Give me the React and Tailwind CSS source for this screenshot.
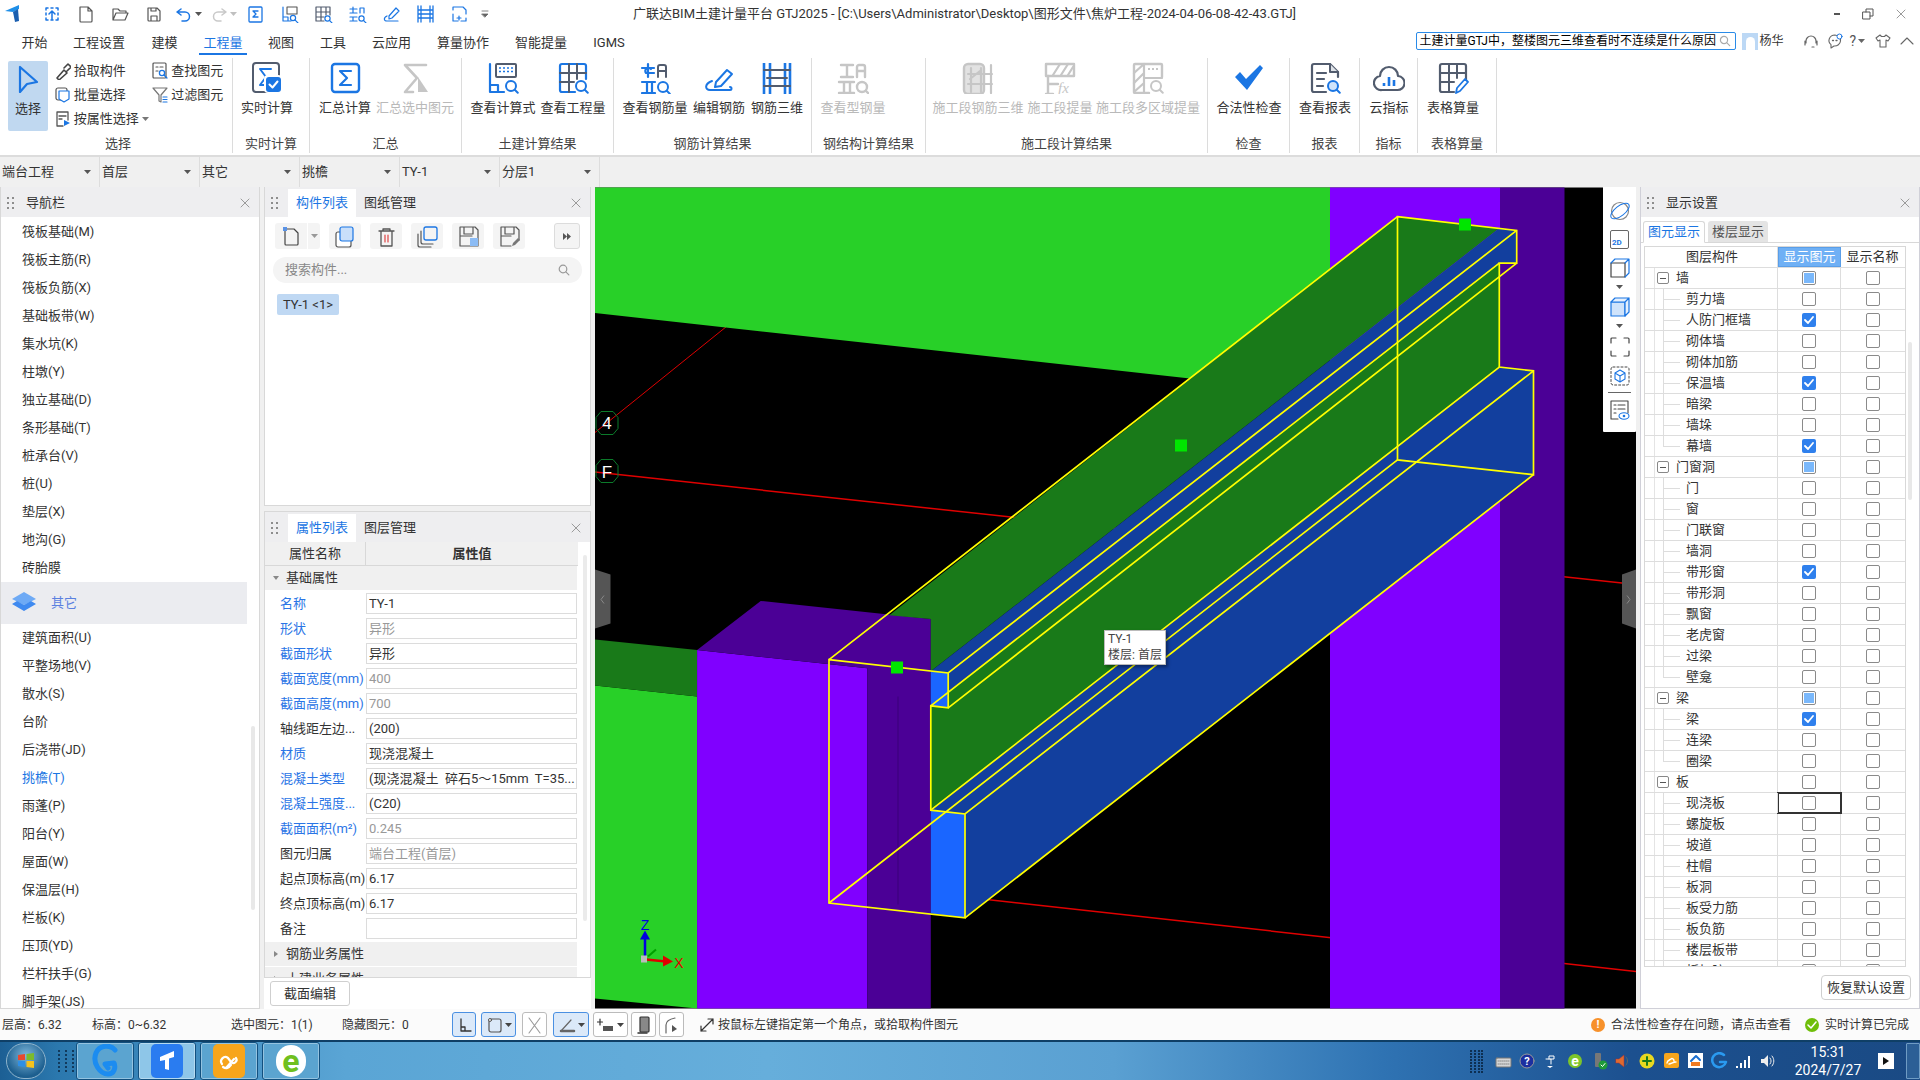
import React from 'react';

const BLUE = '#1b76e3';
const DK = '#525c6e';
const GR = '#c6c6c6';

function Svg({ w = 32, h = 32, vb, className = '', children }) {
  return (
    <svg width={w} height={h} viewBox={vb || `0 0 ${w} ${h}`} fill="none" strokeLinecap="round" strokeLinejoin="round" className={`shrink-0 ${className}`}>
      {children}
    </svg>
  );
}

function Caret({ color = '#666' }) {
  return (
    <Svg w={7} h={4}>
      <path d="M0 0h7L3.5 4z" fill={color} />
    </Svg>
  );
}

function Grip() {
  return (
    <Svg w={8} h={15} className="ml-[6px]">
      {[1, 6, 11].map((y) => (
        <g key={y} fill="#8d8d8d">
          <rect x="0" y={y} width="2" height="2" />
          <rect x="5" y={y} width="2" height="2" />
        </g>
      ))}
    </Svg>
  );
}

function Close() {
  return (
    <Svg w={10} h={10}>
      <path d="M1 1l8 8M9 1l-8 8" stroke="#9a9a9a" strokeWidth="1" />
    </Svg>
  );
}

function Mag({ x = 24, y = 25, r = 4.5, color = BLUE, sw = 2 }) {
  return (
    <g stroke={color} strokeWidth={sw}>
      <circle cx={x} cy={y} r={r} />
      <path d={`M${x + r * 0.75} ${y + r * 0.75}l3 3`} />
    </g>
  );
}

const ribbonIcons = {
  realtime: (
    <Svg>
      <rect x="2" y="1" width="26" height="29" rx="3" stroke={DK} strokeWidth="2" />
      <path d="M20 7H9l6 8-6 8h5" stroke={BLUE} strokeWidth="2" />
      <rect x="13" y="13" width="18" height="18" rx="4" fill="#fff" />
      <rect x="15" y="15" width="15" height="15" rx="3" fill={BLUE} />
      <path d="M18.5 22.5l3 3 5-6" stroke="#fff" strokeWidth="2" />
    </Svg>
  ),
  sum: (
    <Svg>
      <rect x="3" y="2" width="27" height="28" rx="3" stroke={BLUE} strokeWidth="2.4" />
      <path d="M22 9H11l7 7-7 7h11" stroke={BLUE} strokeWidth="2.2" />
    </Svg>
  ),
  sumSel: (
    <Svg>
      <path d="M27 3H6l12 13L6 30h8" stroke={GR} strokeWidth="2.6" />
      <path d="M19 15l10 15H19z" fill={GR} />
    </Svg>
  ),
  formula: (
    <Svg>
      <path d="M3 2v28h14M3 23h8v7" stroke={BLUE} strokeWidth="2.2" />
      <rect x="9" y="2" width="20" height="13" rx="1" stroke={DK} strokeWidth="2" />
      <path d="M12 6h14M12 9.5h14" stroke={BLUE} strokeWidth="1.6" strokeDasharray="2 2" strokeLinecap="butt" />
      <Mag x={24} y={24} r={5} />
    </Svg>
  ),
  quantity: (
    <Svg>
      <path d="M18 30H5a2 2 0 0 1-2-2V4a2 2 0 0 1 2-2h22a2 2 0 0 1 2 2v13" stroke={BLUE} strokeWidth="2.2" />
      <path d="M12 2v28M20 2v15M3 11h26M3 20h14" stroke={DK} strokeWidth="2" />
      <Mag x={24} y={24} r={5} />
    </Svg>
  ),
  rebar: (
    <Svg>
      <path d="M3 6h12M15 11h-8a3 3 0 1 1 5-4M9 2v13" stroke={BLUE} strokeWidth="2.2" />
      <path d="M19 15V5a2 2 0 0 1 2-2h4a2 2 0 0 1 2 2v10M19 9h8" stroke={DK} strokeWidth="2" />
      <path d="M3 20h13M3 31h13M8 20v11M13 20v11" stroke={BLUE} strokeWidth="2.2" />
      <Mag x={24} y={25} r={5} />
    </Svg>
  ),
  edit: (
    <Svg>
      <path d="M13 20L24 8l5 4-11 12-6 1z" stroke={BLUE} strokeWidth="2" />
      <path d="M9 19c-8 3-7 9-2 9h20c2 0 2-3 0-3" stroke={BLUE} strokeWidth="2" />
    </Svg>
  ),
  rebar3d: (
    <Svg>
      <path d="M3 1v32M9 1v32M24 1v32M29 1v32" stroke={BLUE} strokeWidth="2.6" strokeLinecap="butt" />
      <path d="M3 8h26M3 24h26M6 16h20" stroke={DK} strokeWidth="2" />
    </Svg>
  ),
  steel: (
    <Svg>
      <path d="M4 3h12M10 3v12M4 15h12" stroke={GR} strokeWidth="2.4" />
      <path d="M20 15V5a2 2 0 0 1 2-2h4a2 2 0 0 1 2 2v10M20 9h8" stroke={GR} strokeWidth="2.4" />
      <path d="M2 20h15M2 31h15M7 20v11M13 20v11" stroke={GR} strokeWidth="2.4" />
      <Mag x={25} y={25} r={5} color={GR} sw={2.4} />
    </Svg>
  ),
  seg3d: (
    <Svg>
      <rect x="2" y="2" width="20" height="30" rx="4" fill="#e2e2e2" stroke={GR} strokeWidth="2.4" />
      <path d="M9 6v24M19 6v24M29 3v28M6 12h24M6 22h24M8 17l10-8" stroke={GR} strokeWidth="2.2" />
    </Svg>
  ),
  segFx: (
    <Svg>
      <path d="M2 14V2h28v12z" stroke={GR} strokeWidth="2.4" />
      <path d="M9 13l7-11M17 13l7-11M24 13l5-8" stroke={GR} strokeWidth="2.2" />
      <path d="M4 14v18M2 32h7M4 22h10" stroke={GR} strokeWidth="2.4" />
      <text x="14" y="31" fontSize="15" fontStyle="italic" fontFamily="'Liberation Serif',serif" fill={GR}>fx</text>
    </Svg>
  ),
  segArea: (
    <Svg>
      <path d="M17 31H3a1 1 0 0 1-1-1V3a1 1 0 0 1 1-1h26a1 1 0 0 1 1 1v12" stroke={GR} strokeWidth="2.4" />
      <path d="M2 11L12 2M2 21L12 11M2 30L12 21M12 2v29M12 16h18" stroke={GR} strokeWidth="2.2" />
      <path d="M16 7h11" stroke={GR} strokeWidth="2" strokeDasharray="2 2" strokeLinecap="butt" />
      <Mag x={24} y={24} r={5} color={GR} />
    </Svg>
  ),
  check: (
    <Svg>
      <path d="M2 15l5-5 6 7L27 3l3 3-16 22z" fill={BLUE} />
    </Svg>
  ),
  report: (
    <Svg>
      <path d="M17 30H5a2 2 0 0 1-2-2V4a2 2 0 0 1 2-2h16l8 8v5" stroke={DK} strokeWidth="2.2" />
      <path d="M21 2v8h8" stroke={DK} strokeWidth="2" fill="#dfe3e8" />
      <path d="M8 11h9M8 17h7M8 24h6" stroke={DK} strokeWidth="2.2" />
      <circle cx="24" cy="24" r="5" fill="#cfe4fb" />
      <Mag x={24} y={24} r={5} />
    </Svg>
  ),
  cloud: (
    <Svg>
      <path d="M9 28a7 7 0 0 1-2-14 9 9 0 0 1 18 0 7 7 0 0 1-1 14z" stroke={DK} strokeWidth="2.2" />
      <path d="M11 21v3M16 15v9M21 18v6" stroke={BLUE} strokeWidth="2.6" strokeLinecap="butt" />
    </Svg>
  ),
  table: (
    <Svg>
      <path d="M17 30H5a2 2 0 0 1-2-2V4a2 2 0 0 1 2-2h22a2 2 0 0 1 2 2v14" stroke={DK} strokeWidth="2.2" />
      <path d="M12 2v28M20 2v14M3 11h26M3 20h14" stroke={DK} strokeWidth="2" />
      <path d="M19 31l1-5 8-9 3 3-8 9z" stroke={BLUE} strokeWidth="1.8" />
    </Svg>
  ),
};

const ribbonGroups = [
  { label: '实时计算', w: 'w-[77px]', pl: 'pl-[1px]', btns: [{ t: '实时计算', i: 'realtime', w: 'w-[66px]' }] },
  { label: '汇总', w: 'w-[152px]', pl: '', btns: [{ t: '汇总计算', i: 'sum', w: 'w-[70px]' }, { t: '汇总选中图元', i: 'sumSel', w: 'w-[70px]', off: true }] },
  { label: '土建计算结果', w: 'w-[152px]', pl: 'pl-[6px]', btns: [{ t: '查看计算式', i: 'formula', w: 'w-[70px]' }, { t: '查看工程量', i: 'quantity', w: 'w-[70px]' }] },
  { label: '钢筋计算结果', w: 'w-[198px]', pl: 'pl-[6px]', btns: [{ t: '查看钢筋量', i: 'rebar', w: 'w-[70px]' }, { t: '编辑钢筋', i: 'edit', w: 'w-[58px]' }, { t: '钢筋三维', i: 'rebar3d', w: 'w-[58px]' }] },
  { label: '钢结构计算结果', w: 'w-[114px]', pl: 'pl-[6px]', btns: [{ t: '查看型钢量', i: 'steel', w: 'w-[70px]', off: true }] },
  { label: '施工段计算结果', w: 'w-[282px]', pl: 'pl-[6px]', btns: [{ t: '施工段钢筋三维', i: 'seg3d', w: 'w-[92px]', off: true }, { t: '施工段提量', i: 'segFx', w: 'w-[72px]', off: true }, { t: '施工段多区域提量', i: 'segArea', w: 'w-[104px]', off: true }] },
  { label: '检查', w: 'w-[82px]', pl: 'pl-[6px]', btns: [{ t: '合法性检查', i: 'check', w: 'w-[70px]' }] },
  { label: '报表', w: 'w-[70px]', pl: 'pl-[4px]', btns: [{ t: '查看报表', i: 'report', w: 'w-[62px]' }] },
  { label: '指标', w: 'w-[58px]', pl: 'pl-[4px]', btns: [{ t: '云指标', i: 'cloud', w: 'w-[50px]' }] },
  { label: '表格算量', w: 'w-[79px]', pl: 'pl-[4px]', btns: [{ t: '表格算量', i: 'table', w: 'w-[62px]' }] },
];

function RibbonGroup({ group }) {
  return (
    <div className={`${group.w} h-[95px] border-r border-[#dcdcdc] flex flex-col shrink-0`}>
      <div className={`h-[77px] flex shrink-0 ${group.pl}`}>
        {group.btns.map((b) => (
          <div key={b.t} className={`${b.w} flex flex-col items-center pt-[4px]`}>
            <div className="h-[32px] flex items-center">{ribbonIcons[b.i]}</div>
            <div className={`mt-[5px] text-[13px] leading-[18px] whitespace-nowrap ${b.off ? 'text-[#b9b9b9]' : 'text-[#333]'}`}>{b.t}</div>
          </div>
        ))}
      </div>
      <div className="text-[13px] leading-[18px] text-center text-[#444] whitespace-nowrap">{group.label}</div>
    </div>
  );
}

function SmallTool({ icon, label, caret }) {
  return (
    <div className="flex items-center h-[24px]">
      {icon}
      <span className="ml-[3px] text-[13px] whitespace-nowrap">{label}</span>
      {caret && <span className="ml-[3px]"><Caret color="#777" /></span>}
    </div>
  );
}

function SelectGroup() {
  return (
    <div className="w-[233px] h-[95px] border-r border-[#dcdcdc] flex flex-col shrink-0">
      <div className="h-[77px] flex shrink-0 pl-[8px] pt-[3px]">
        <div className="w-[40px] h-[70px] bg-[#c0d8f0] rounded-[2px] flex flex-col items-center pt-[4px]">
          <Svg w={22} h={28}>
            <path d="M3 2v25l7-8 10-2z" stroke={BLUE} strokeWidth="2.2" />
          </Svg>
          <span className="mt-[7px] text-[13px] leading-[18px]">选择</span>
        </div>
        <div className="ml-[7px] mt-[-2px] w-[98px] flex flex-col">
          <SmallTool label="拾取构件" icon={<Svg w={16} h={18}><path d="M2 16l7-8 3 3-8 7zM9 6l4-4 3 3-4 4" stroke="#444" strokeWidth="1.6" /></Svg>} />
          <SmallTool label="批量选择" icon={<Svg w={16} h={18}><rect x="1" y="2" width="11" height="12" rx="2" stroke="#555" strokeWidth="1.2" /><path d="M4 5h10v8l-5 3-5-3z" stroke={BLUE} strokeWidth="1.2" fill="#fff" /></Svg>} />
          <SmallTool label="按属性选择" caret icon={<Svg w={16} h={18}><path d="M8 16H2V2h11v8M4 6h7M4 9h3" stroke="#555" strokeWidth="1.3" /><path d="M9 10l6 3-6 3z" fill={BLUE} /></Svg>} />
        </div>
        <div className="w-[80px] mt-[-2px] flex flex-col">
          <SmallTool label="查找图元" icon={<Svg w={16} h={18}><rect x="1" y="1" width="13" height="15" rx="1" stroke="#555" strokeWidth="1.2" /><path d="M4 5h2M8 5h3M4 9h2" stroke="#555" strokeWidth="1.2" /><Mag x={10} y={11} r={2.6} sw={1.3} /></Svg>} />
          <SmallTool label="过滤图元" icon={<Svg w={16} h={18}><path d="M1 2h14L9 9v7l-2-1V9z" stroke="#777" strokeWidth="1.2" /><path d="M11 11h4M11 13.5h4M11 16h4" stroke={BLUE} strokeWidth="1.2" /></Svg>} />
        </div>
      </div>
      <div className="text-[13px] leading-[18px] text-center text-[#444] pl-[4px]">选择</div>
    </div>
  );
}

const quickIcons = [
  <path key="a" d="M3 3h2M8 3h2M13 3h2M3 3v2M15 3v2M3 8v2M15 8v2M3 13v2M15 13v2M3 15h2M8 15h2M13 15h2M9 14V6M6 9l3-3 3 3" stroke={BLUE} strokeWidth="1.5" />,
  <path key="b" d="M3 2h8l4 4v10a1 1 0 0 1-1 1H4a1 1 0 0 1-1-1zM11 2v4h4" stroke="#555" strokeWidth="1.2" />,
  <path key="c" d="M2 15V4h5l2 2h6v2M2 15l3-7h12l-3 7z" stroke="#555" strokeWidth="1.2" />,
  <path key="d" d="M3 3h9l3 3v9a1 1 0 0 1-1 1H4a1 1 0 0 1-1-1zM6 16v-5h6v5M6 3v3h5V3" stroke="#555" strokeWidth="1.2" />,
];

function QuickBar() {
  const tail = [
    <g key="s"><rect x="3" y="2" width="13" height="15" rx="1" stroke={BLUE} strokeWidth="1.3" /><path d="M12 6H7l3 3-3 3h5" stroke={BLUE} strokeWidth="1.3" /></g>,
    <g key="f"><path d="M3 2v14h8M3 12h5v4" stroke={BLUE} strokeWidth="1.2" /><rect x="7" y="2" width="10" height="7" stroke="#555" strokeWidth="1.1" /><Mag x={13} y={13} r={2.6} sw={1.2} /></g>,
    <g key="q"><path d="M10 16H2V2h14v8M7 2v14M12 2v8M2 7h14M2 12h8" stroke={DK} strokeWidth="1.2" /><Mag x={13.5} y={13.5} r={2.6} sw={1.2} /></g>,
    <g key="r"><path d="M2 4h7M5 2v6M2 8h7M12 8V3h4v5M2 12h7M2 16h7M5 12v4" stroke={BLUE} strokeWidth="1.2" /><Mag x={13.5} y={13.5} r={2.6} sw={1.2} /></g>,
    <g key="e"><path d="M7 11l7-8 3 3-7 7-3 1zM5 11c-4 2-3 5 0 5h11" stroke={BLUE} strokeWidth="1.2" /></g>,
    <path key="t" d="M2 1v16M5 1v16M14 1v16M17 1v16M2 5h15M2 13h15M3 9h13" stroke={BLUE} strokeWidth="1.3" />,
    <g key="x"><path d="M3 5V2h10l3 3v4M3 9v7h5M11 16h5v-3M9 11v4M7 13h4" stroke={BLUE} strokeWidth="1.2" /></g>,
  ];
  return (
    <div className="flex items-center h-[27px] w-[510px] shrink-0">
      <Svg w={20} h={18} className="ml-[5px]">
        <path d="M0 6l14-6v4l-6 3z" fill="#1f8fe8" />
        <path d="M8 7l5-3 1 12-4 1z" fill="#1b5fb0" />
      </Svg>
      <Svg w={18} h={18} className="ml-[18px]">{quickIcons[0]}</Svg>
      <Svg w={18} h={18} className="ml-[16px]">{quickIcons[1]}</Svg>
      <Svg w={18} h={18} className="ml-[16px]">{quickIcons[2]}</Svg>
      <Svg w={18} h={18} className="ml-[16px]">{quickIcons[3]}</Svg>
      <Svg w={16} h={16} className="ml-[13px]"><path d="M5 3L1 6l4 3M1 6h8a4.5 4.5 0 0 1 0 9H6" stroke={BLUE} strokeWidth="1.5" /></Svg>
      <span className="ml-[3px]"><Caret color="#555" /></span>
      <Svg w={16} h={16} className="ml-[9px]"><path d="M11 3l4 3-4 3M15 6H7a4.5 4.5 0 0 0 0 9h3" stroke="#c9c9c9" strokeWidth="1.5" /></Svg>
      <span className="ml-[3px]"><Caret color="#c0c0c0" /></span>
      <div className="flex ml-[9px] gap-[15px]">
        {tail.map((icon, i) => (
          <Svg key={i} w={19} h={18}>{icon}</Svg>
        ))}
      </div>
      <Svg w={8} h={8} className="ml-[12px]"><path d="M1 1h6M1 4h6L4 7z" stroke="#666" fill="#666" strokeWidth="0.8" /></Svg>
    </div>
  );
}

const menus = [
  ['开始', 'w-[51px]'], ['工程设置', 'w-[78px]'], ['建模', 'w-[53px]'], ['工程量', 'w-[64px]'], ['视图', 'w-[52px]'], ['工具', 'w-[52px]'], ['云应用', 'w-[65px]'], ['算量协作', 'w-[78px]'], ['智能提量', 'w-[78px]'], ['IGMS', 'w-[58px]'],
];

function MenuBar() {
  return (
    <div className="flex items-center h-[28px] bg-white shrink-0 relative">
      <div className="flex pl-[9px]">
        {menus.map(([t, w]) => (
          <div key={t} className={`${w} h-[28px] text-center text-[13px] leading-[32px] ${t === '工程量' ? 'text-[#1b76e3]' : 'text-[#333]'}`}>
            <span className={`inline-block h-[28px] px-[4px] ${t === '工程量' ? 'border-b-2 border-[#1b76e3]' : ''}`}>{t}</span>
          </div>
        ))}
      </div>
      <div className="ml-auto flex items-center pr-[6px]">
        <div className="w-[320px] h-[18px] border border-[#2a8be8] rounded-[2px] bg-white flex items-center pl-[2px] pr-[4px]">
          <span className="text-[12px] leading-[16px] text-black whitespace-nowrap overflow-hidden w-[298px]">土建计量GTJ中，整楼图元三维查看时不连续是什么原因</span>
          <Svg w={12} h={12} className="ml-auto"><Mag x={5} y={5} r={3.6} color="#aaa" sw={1.2} /></Svg>
        </div>
        <div className="ml-[6px] w-[16px] h-[17px] bg-[#bcd8f5] flex items-end justify-center">
          <div className="w-[9px] h-[13px] rounded-t-full bg-white" />
        </div>
        <span className="text-[12px] text-[#333] ml-[1px] w-[44px]">杨华</span>
        <Svg w={16} h={16}><path d="M3 10V8a5 5 0 0 1 10 0v2M2 8v4M14 8v4M11 14h-2" stroke="#666" strokeWidth="1.2" /></Svg>
        <Svg w={16} h={16} className="ml-[8px]"><path d="M8 2a6 5.5 0 0 0-4 9.6V15l3-2a6 5.5 0 1 0 1-11z" stroke="#666" strokeWidth="1.1" /><circle cx="12.5" cy="3.5" r="2.5" fill="#fff" stroke={BLUE} /><path d="M5.5 7.5h1M9 7.5h1" stroke="#666" strokeWidth="1.3" /></Svg>
        <span className="ml-[6px] text-[14px] text-[#555] leading-none">?</span>
        <span className="ml-[2px]"><Caret color="#666" /></span>
        <Svg w={16} h={16} className="ml-[10px]"><path d="M5 2L1 5l2 3 2-1v7h6V7l2 1 2-3-4-3-1.500 1.500h-3z" stroke="#666" strokeWidth="1.1" /></Svg>
        <Svg w={14} h={10} className="ml-[9px]"><path d="M1 8l6-6 6 6" stroke="#666" strokeWidth="1.1" /></Svg>
      </div>
    </div>
  );
}

const selectors = ['端台工程', '首层', '其它', '挑檐', 'TY-1', '分层1'];

function SelectorBar() {
  return (
    <div className="flex h-[31px] bg-[#f0f0f0] border-t border-[#dcdcdc] shrink-0">
      {selectors.map((t) => (
        <div key={t} className="w-[100px] border-r border-[#dddddd] flex items-center pl-[2px] pr-[8px] justify-between text-[13px] text-[#333]">
          <span>{t}</span>
          <Caret color="#555" />
        </div>
      ))}
    </div>
  );
}

const navTop = ['筏板基础(M)', '筏板主筋(R)', '筏板负筋(X)', '基础板带(W)', '集水坑(K)', '柱墩(Y)', '独立基础(D)', '条形基础(T)', '桩承台(V)', '桩(U)', '垫层(X)', '地沟(G)', '砖胎膜'];
const navBottom = ['建筑面积(U)', '平整场地(V)', '散水(S)', '台阶', '后浇带(JD)', '挑檐(T)', '雨蓬(P)', '阳台(Y)', '屋面(W)', '保温层(H)', '栏板(K)', '压顶(YD)', '栏杆扶手(G)', '脚手架(JS)'];

function PanelHead({ children }) {
  return (
    <div className="h-[30px] pt-[2px] bg-[#eeeef0] flex items-center shrink-0 pr-[9px]">
      <Grip />
      {children}
      <span className="ml-auto"><Close /></span>
    </div>
  );
}

function Tabs({ active, other }) {
  return (
    <div className="flex items-stretch h-[28px] ml-[9px] text-[13px]">
      <div className="w-[68px] bg-white text-[#1b76e3] flex items-center justify-center">{active}</div>
      <div className="w-[68px] text-[#333] flex items-center justify-center">{other}</div>
    </div>
  );
}

function NavPanel() {
  const row = (t) => (
    <div key={t} className={`h-[28px] pl-[21px] flex items-center text-[13px] shrink-0 ${t === '挑檐(T)' ? 'text-[#1b76e3]' : 'text-[#333]'}`}>{t}</div>
  );
  return (
    <div className="w-[260px] shrink-0 bg-white border-l border-r border-b border-[#d8d8d8] flex flex-col overflow-hidden relative">
      <PanelHead>
        <span className="ml-[11px] text-[13px] text-[#333]">导航栏</span>
      </PanelHead>
      <div className="pt-[1px] flex flex-col">
        {navTop.map(row)}
        <div className="h-[42px] w-[246px] bg-[#ebecf0] flex items-center pl-[11px] shrink-0">
          <Svg w={25} h={22}>
            <path d="M12 0l12 7-12 6L0 7z" fill="#6eaaf5" />
            <path d="M0 12l5-3 7 4 7-4 5 3-12 7z" fill="#3f8af0" />
          </Svg>
          <span className="ml-[14px] text-[13px] text-[#5a80e0]">其它</span>
        </div>
        {navBottom.map(row)}
      </div>
      <div className="absolute left-[250px] top-[539px] w-[4px] h-[184px] rounded-full bg-[#e8e8e8]" />
    </div>
  );
}

const toolIcons = [
  <g key="1"><rect x="3" y="8" width="15" height="15" rx="2" fill="#fff" stroke="#555" strokeWidth="1.2" /><rect x="7" y="3" width="13" height="14" rx="2" fill="#c9dffa" stroke={BLUE} strokeWidth="1.2" /></g>,
  <g key="2"><path d="M5 7h15M9 7V5h7v2M7 7v15h11V7" stroke="#555" strokeWidth="1.3" /><path d="M11 11v7M14 11v7" stroke="#d33" strokeWidth="1.1" /></g>,
  <g key="3"><rect x="9" y="3" width="13" height="13" rx="2" stroke={BLUE} strokeWidth="1.3" /><path d="M6 7v11a2 2 0 0 0 2 2h10M3 10v11a2 2 0 0 0 2 2h11" stroke="#555" strokeWidth="1.2" /></g>,
  <g key="4"><path d="M4 3h15l3 3v16H4zM8 3v7h9V3M4 12h12" stroke="#555" strokeWidth="1.2" /><rect x="14" y="14" width="8" height="8" fill="#8cbcf5" /></g>,
  <g key="5"><path d="M4 3h15l3 3v10M14 22H4V3M8 3v7h9V3M4 12h10" stroke="#555" strokeWidth="1.2" /><path d="M15 22l1-3 5-5 2 2-5 5z" fill="#777" /></g>,
];

function MemberPanel() {
  return (
    <div className="h-[319px] shrink-0 bg-white border border-[#d8d8d8] border-t-0 flex flex-col">
      <PanelHead>
        <Tabs active="构件列表" other="图纸管理" />
      </PanelHead>
      <div className="flex items-center h-[26px] mt-[6px] pl-[10px]">
        <div className="w-[32px] h-[26px] bg-[#f4f4f4] rounded-l-[3px] flex items-center justify-center">
          <Svg w={18} h={20}><path d="M3 3h9l4 4v11a1 1 0 0 1-1 1H4a1 1 0 0 1-1-1z" stroke="#444" strokeWidth="1.2" /><path d="M1 1h4v4H1z" fill="#5a93e6" /></Svg>
        </div>
        <div className="w-[12px] h-[26px] ml-[1px] bg-[#f4f4f4] rounded-r-[3px] flex items-center justify-center"><Caret color="#999" /></div>
        {toolIcons.map((icon, i) => (
          <div key={i} className="w-[32px] h-[26px] bg-[#f4f4f4] rounded-[3px] flex items-center justify-center ml-[9px]">
            <Svg w={24} h={24}>{icon}</Svg>
          </div>
        ))}
        <div className="w-[26px] h-[26px] ml-[29px] bg-[#f4f4f4] border border-[#dcdcdc] rounded-[3px] flex items-center justify-center">
          <Svg w={8} h={7}><path d="M0 0l4 3.500L0 7zM4 0l4 3.500L4 7z" fill="#555" /></Svg>
        </div>
      </div>
      <div className="mx-[8px] mt-[8px] h-[26px] rounded-full bg-[#f4f4f4] flex items-center pl-[12px] pr-[12px] text-[13px] text-[#888]">
        <span>搜索构件...</span>
        <Svg w={12} h={12} className="ml-auto"><Mag x={5} y={5} r={3.8} color="#999" sw={1.2} /></Svg>
      </div>
      <div className="ml-[12px] mt-[11px] w-[62px] h-[21px] rounded-[2px] bg-[#bfd8f3] text-[13px] text-[#333] flex items-center justify-center whitespace-pre">TY-1 &lt;1&gt;</div>
    </div>
  );
}

const props = [
  ['名称', 1, 'TY-1', 0], ['形状', 1, '异形', 1], ['截面形状', 1, '异形', 0], ['截面宽度(mm)', 1, '400', 1], ['截面高度(mm)', 1, '700', 1], ['轴线距左边...', 0, '(200)', 0], ['材质', 1, '现浇混凝土', 0],
  ['混凝土类型', 1, '(现浇混凝土  碎石5～15mm  T=35...', 0], ['混凝土强度...', 1, '(C20)', 0], ['截面面积(m²)', 1, '0.245', 1], ['图元归属', 0, '端台工程(首层)', 1], ['起点顶标高(m)', 0, '6.17', 0], ['终点顶标高(m)', 0, '6.17', 0], ['备注', 0, '', 0],
];

function PropGroup({ label, open, className = '' }) {
  return (
    <div className={`w-[312px] bg-[#f0f0f0] flex items-center pl-[8px] text-[13px] text-[#333] shrink-0 ${className}`}>
      <Svg w={6} h={6}>
        {open ? <path d="M0 1h6L3 5z" fill="#888" /> : <path d="M1 0l4 3-4 3z" fill="#888" />}
      </Svg>
      <span className="ml-[7px]">{label}</span>
    </div>
  );
}

function PropPanel() {
  return (
    <div className="flex-1 flex flex-col min-h-0 mt-[5px]">
      <div className="h-[467px] shrink-0 bg-white border border-[#d8d8d8] flex flex-col overflow-hidden relative">
        <PanelHead>
          <Tabs active="属性列表" other="图层管理" />
        </PanelHead>
        <div className="flex h-[24px] w-[313px] bg-[#f0f0f0] border-b border-[#d8d8d8] text-[13px] text-[#333] shrink-0">
          <div className="w-[101px] border-r border-[#d8d8d8] flex items-center justify-center">属性名称</div>
          <div className="flex-1 flex items-center justify-center font-bold">属性值</div>
        </div>
        <PropGroup label="基础属性" open className="h-[24px]" />
        <div className="pt-[1px] flex flex-col">
          {props.map(([name, link, value, dim]) => (
            <div key={name} className="h-[25px] flex items-center shrink-0">
              <div className={`w-[101px] pl-[15px] text-[13px] whitespace-nowrap ${link ? 'text-[#2a75e6]' : 'text-[#333]'}`}>{name}</div>
              <div className={`w-[211px] h-[21px] border border-[#dcdcdc] bg-white px-[2px] text-[13px] leading-[19px] whitespace-pre overflow-hidden ${dim ? 'text-[#999]' : 'text-[#333]'}`}>{value}</div>
            </div>
          ))}
        </div>
        <PropGroup label="钢筋业务属性" className="h-[24px] mt-[1px]" />
        <PropGroup label="土建业务属性" className="h-[24px] mt-[1px]" />
        <div className="absolute left-[318px] top-[43px] w-[4px] h-[366px] rounded-full bg-[#ebebeb]" />
      </div>
      <div className="flex-1 bg-white flex items-start pl-[6px] pt-[3px]">
        <div className="w-[80px] h-[25px] border border-[#cfcfcf] rounded-[3px] flex items-center justify-center text-[13px] text-[#333]">截面编辑</div>
      </div>
    </div>
  );
}

function Scene() {
  return (
    <svg viewBox="595 188 1041 821" className="w-full h-full block">
      <rect x="595" y="188" width="1041" height="821" fill="#000" />
      <path d="M595 433L760 300" stroke="#d00" strokeWidth="1" />
      <path d="M595 472.600L1636 585" stroke="#e00000" strokeWidth="1.500" />
      <path d="M960 897L1636 972" stroke="#e00000" strokeWidth="1.500" />
      <polygon points="595,188 1330,188 1330,270 1190,379 595,313.600" fill="#28d028" />
      <rect x="1330" y="188" width="170" height="821" fill="#8000ff" />
      <rect x="1500" y="188" width="64.500" height="821" fill="#4b0096" />
      <polygon points="595,686 697.100,697 697.100,1009 595,999" fill="#28d028" />
      <polygon points="595,640 697.100,650.600 697.100,697 595,686" fill="#197a19" />
      <polygon points="697.100,650.600 867.200,668.700 867.200,1009 697.100,1009" fill="#8000ff" />
      <polygon points="697.100,650.600 760.700,601.400 930.800,619.400 930.800,1009 867.200,1009 867.200,668.700" fill="#4b0096" />
      <path d="M898 697V905" stroke="#3a0078" strokeWidth="1" />
      <polygon points="889.300,615.700 1397.500,217.100 1499.300,228.800 930.800,671.800 930.800,619.400" fill="#197a19" />
      <polygon points="930.800,671.800 1499.300,228.800 1516.700,230.900 1516.700,263.700 1499.300,263.700 930.800,706.300" fill="#123f9e" />
      <polygon points="930.800,706.300 1499.300,263.700 1499.300,367.600 930.800,810.700" fill="#197a19" />
      <polygon points="930.800,810.700 1499.300,367.600 1533.500,371.300 1533.500,475.200 965,918.300 965,814.400" fill="#123f9e" />
      <polygon points="930.800,672 948.200,673.400 948.200,708.400 930.800,706.300" fill="#1a66ff" />
      <polygon points="930.800,810.700 965,814.400 965,918.300 930.800,914" fill="#1a66ff" />
      <g stroke="#ffff00" strokeWidth="1.700" fill="none">
        <polygon points="829,660.200 948.200,673.400 948.200,708.400 930.800,706.300 930.800,810.700 965,814.400 965,918.300 829,903.500" />
        <polygon points="1397.500,217.100 1516.700,230.900 1516.700,263.700 1499.300,263.700 1499.300,367.600 1533.500,371.300 1533.500,475.200 1397.500,460.400" />
        <path d="M829 660.200L1397.500 217.100M948.200 673.400L1516.700 230.900M948.200 708.400L1516.700 263.700M930.800 706.300L1499.300 263.700M930.800 810.700L1499.300 367.600M965 814.400L1533.500 371.300M965 918.300L1533.500 475.200M829 903.500L1397.500 460.400" />
      </g>
      <rect x="1459" y="219" width="12" height="12" fill="#00e600" />
      <rect x="1175" y="440" width="12" height="12" fill="#00e600" />
      <rect x="891" y="662" width="12" height="12" fill="#00e600" />
      <g fill="none" stroke="#0b7a2a" strokeWidth="1">
        <polygon points="601,412 613,412 618,418 618,429 613,435 601,435 596,429 596,418" />
        <polygon points="601,460 613,460 618,466 618,477 613,483 601,483 596,477 596,466" />
      </g>
      <text x="607" y="429" fontSize="17" fill="#fff" textAnchor="middle" fontFamily="'Liberation Sans',sans-serif">4</text>
      <text x="607" y="478" fontSize="17" fill="#fff" textAnchor="middle" fontFamily="'Liberation Sans',sans-serif">F</text>
      <polygon points="595,570 610.500,575 610.500,624 595,629" fill="#555" />
      <path d="M604 596l-3 4 3 4" stroke="#888" strokeWidth="1" fill="none" />
      <polygon points="1636,570 1622,575 1622,624 1636,629" fill="#555" />
      <path d="M1627 596l3 4-3 4" stroke="#888" strokeWidth="1" fill="none" />
      <path d="M645 958V938" stroke="#0000e0" strokeWidth="2.500" />
      <path d="M640 940l5-9 5 9z" fill="#0000e0" />
      <path d="M646 960L666 962" stroke="#e00000" strokeWidth="2.500" />
      <path d="M663 956l10 6-10 5z" fill="#e00000" />
      <path d="M648 957l8-7" stroke="#00a000" strokeWidth="2" />
      <rect x="641" y="956" width="6" height="7" fill="#bbb" />
      <text x="645" y="930" fontSize="14" fill="#0000e0" textAnchor="middle" fontFamily="'Liberation Sans',sans-serif">Z</text>
      <text x="679" y="968" fontSize="14" fill="#e00000" textAnchor="middle" fontFamily="'Liberation Sans',sans-serif">X</text>
    </svg>
  );
}

function SideTools() {
  return (
    <div className="absolute right-0 top-0 w-[33px] h-[245px] bg-white flex flex-col items-center pt-[13px] rounded-b-[1px]">
      <Svg w={22} h={22}>
        <circle cx="11" cy="11" r="8.500" stroke="#888" strokeWidth="1.2" />
        <ellipse cx="11" cy="11" rx="11" ry="5" transform="rotate(-38 11 11)" stroke={BLUE} strokeWidth="1" />
      </Svg>
      <div className="mt-[8px] w-[19px] h-[19px] border border-[#666] rounded-[2px] flex items-end justify-start pl-[1px] text-[8px] leading-[11px] font-bold text-[#1b76e3]">2D</div>
      <Svg w={21} h={21} className="mt-[8px]">
        <path d="M2 6h14v14H2z" stroke="#444" strokeWidth="1.2" />
        <path d="M2 6l4-4h14l-4 4M20 2v14l-4 4" stroke={BLUE} strokeWidth="1.2" />
      </Svg>
      <span className="mt-[7px] leading-none flex"><Caret color="#555" /></span>
      <Svg w={21} h={21} className="mt-[7px]">
        <path d="M2 6h14v14H2z" fill="#cfe3fb" stroke={BLUE} strokeWidth="1.2" />
        <path d="M2 6l4-4h14l-4 4zM20 2v14l-4 4V6z" fill="#e6f0fd" stroke={BLUE} strokeWidth="1.2" />
      </Svg>
      <span className="mt-[7px] leading-none flex"><Caret color="#555" /></span>
      <Svg w={20} h={20} className="mt-[9px]">
        <path d="M1 6V2a1 1 0 0 1 1-1h4M14 1h4a1 1 0 0 1 1 1v4M19 14v4a1 1 0 0 1-1 1h-4M6 19H2a1 1 0 0 1-1-1v-4" stroke="#444" strokeWidth="1.2" />
      </Svg>
      <Svg w={20} h={20} className="mt-[9px]">
        <rect x="1" y="1" width="18" height="18" rx="2" stroke="#444" strokeWidth="1" strokeDasharray="2 2" />
        <path d="M10 4l5 3v6l-5 3-5-3V7zM5 7l5 3 5-3M10 10v6" stroke={BLUE} strokeWidth="1.1" />
      </Svg>
      <div className="mt-[6px] w-[23px] h-px bg-[#666]" />
      <Svg w={21} h={20} className="mt-[7px]">
        <path d="M9 19H2V1h17v12" stroke="#444" strokeWidth="1.1" />
        <path d="M5 5h2M9 5h7M5 9h2M9 9h7M5 13h2" stroke="#444" strokeWidth="1.1" />
        <ellipse cx="15" cy="16" rx="5" ry="3.200" stroke={BLUE} strokeWidth="1.1" fill="#fff" />
        <circle cx="15" cy="16" r="1.300" fill={BLUE} />
      </Svg>
    </div>
  );
}

function Viewport() {
  return (
    <div className="w-[1041px] shrink-0 relative overflow-hidden">
      <Scene />
      <SideTools />
      <div className="absolute left-[509px] top-[443px] w-[62px] h-[35px] bg-white border border-[#bbb] shadow-[2px_2px_3px_rgba(0,0,0,0.4)] pl-[3px] text-[12px] leading-[16px] text-[#444] whitespace-nowrap">
        <div>TY-1</div>
        <div>楼层: 首层</div>
      </div>
    </div>
  );
}

const layers = [
  ['墙', 'group', 'partial'], ['剪力墙'], ['人防门框墙', '', 'on'], ['砌体墙'], ['砌体加筋'], ['保温墙', '', 'on'], ['暗梁'], ['墙垛'], ['幕墙', 'last', 'on'],
  ['门窗洞', 'group', 'partial'], ['门'], ['窗'], ['门联窗'], ['墙洞'], ['带形窗', '', 'on'], ['带形洞'], ['飘窗'], ['老虎窗'], ['过梁'], ['壁龛', 'last'],
  ['梁', 'group', 'partial'], ['梁', '', 'on'], ['连梁'], ['圈梁', 'last'],
  ['板', 'group'], ['现浇板', '', '', true], ['螺旋板'], ['坡道'], ['柱帽'], ['板洞'], ['板受力筋'], ['板负筋'], ['楼层板带'], ['板加腋'],
];

function Check({ state }) {
  if (state === 'on') {
    return (
      <div className="w-[14px] h-[14px] rounded-[2px] bg-[#2f80ed] flex items-center justify-center">
        <Svg w={10} h={8}><path d="M1 4l3 3 5-6" stroke="#fff" strokeWidth="1.800" /></Svg>
      </div>
    );
  }
  return (
    <div className="w-[14px] h-[14px] rounded-[2px] border border-[#8a8a8a] bg-white flex items-center justify-center">
      {state === 'partial' && <div className="w-[10px] h-[10px] bg-[#7ab8fb]" />}
    </div>
  );
}

function LayerRow({ row }) {
  const [name, kind, state, focus] = row;
  const isGroup = kind === 'group';
  return (
    <div className="h-[21px] flex border-b border-[#dddddd] shrink-0">
      <div className="w-[133px] relative border-r border-[#dddddd] flex items-center text-[13px] text-[#333]">
        <div className="absolute left-[9px] top-0 bottom-0 w-px bg-[#e4e4e4]" />
        {isGroup ? (
          <>
            <div className="absolute left-[12px] top-[4px] w-[12px] h-[12px] border border-[#888] rounded-[2px] bg-white flex items-center justify-center">
              <div className="w-[6px] h-px bg-[#555]" />
            </div>
            <span className="ml-[31px]">{name}</span>
          </>
        ) : (
          <>
            <div className={`absolute left-[18px] top-0 w-px bg-[#dddddd] ${kind === 'last' ? 'h-[10px]' : 'h-[21px]'}`} />
            <div className="absolute left-[18px] top-[10px] w-[17px] h-px bg-[#dddddd]" />
            <span className="ml-[41px]">{name}</span>
          </>
        )}
      </div>
      <div className={`w-[63px] border-r border-[#dddddd] flex items-center justify-center ${focus ? 'outline-2 -outline-offset-1 outline-[#333]' : ''}`}>
        <Check state={state} />
      </div>
      <div className="w-[63px] flex items-center justify-center">
        <Check />
      </div>
    </div>
  );
}

function DisplayPanel() {
  return (
    <div className="flex-1 min-w-0 bg-white border border-[#d0d0d8] border-t-0 flex flex-col overflow-hidden relative">
      <PanelHead>
        <span className="ml-[11px] text-[13px] text-[#333]">显示设置</span>
      </PanelHead>
      <div className="flex items-end h-[26px] pl-[2px] border-b border-[#d8d8d8] shrink-0 text-[13px]">
        <div className="w-[62px] h-[22px] mb-[-1px] bg-white border border-[#d8d8d8] border-b-white rounded-t-[3px] flex items-center justify-center text-[#1b76e3]">图元显示</div>
        <div className="w-[60px] h-[21px] ml-[3px] bg-[#e4e4e4] rounded-t-[3px] flex items-center justify-center text-[#555]">楼层显示</div>
      </div>
      <div className="ml-[3px] mt-[3px] w-[262px] h-[721px] border border-[#d8d8d8] overflow-hidden flex flex-col shrink-0">
        <div className="h-[21px] flex text-[13px] shrink-0 border-b border-[#dddddd]">
          <div className="w-[133px] border-r border-[#dddddd] flex items-center justify-center text-[#333] pl-[2px]">图层构件</div>
          <div className="w-[63px] bg-[#6fb0f5] border border-[#5a9ee8] flex items-center justify-center text-white">显示图元</div>
          <div className="w-[63px] flex items-center justify-center text-[#333]">显示名称</div>
        </div>
        {layers.map((r, i) => (
          <LayerRow key={i} row={r} />
        ))}
      </div>
      <div className="absolute left-[267px] top-[155px] w-[4px] h-[158px] rounded-full bg-[#e8e8e8]" />
      <div className="flex justify-end pr-[8px] mt-[8px]">
        <div className="w-[90px] h-[25px] border border-[#cfcfcf] rounded-[4px] flex items-center justify-center text-[13px] text-[#333]">恢复默认设置</div>
      </div>
    </div>
  );
}

const statusBtns = [
  { w: 'w-[24px]', on: true, icon: <path d="M6 3v12h10M6 11h4v4" stroke="#333" strokeWidth="1.3" /> },
  { w: 'w-[35px]', on: true, caret: true, icon: <g><rect x="4" y="3" width="12" height="13" rx="2" stroke="#555" strokeWidth="1.2" /><circle cx="5" cy="4" r="1.500" fill="#fff" stroke="#555" /></g> },
  { w: 'w-[25px]', icon: <path d="M4 2l11 15M15 2L4 17" stroke="#999" strokeWidth="1.1" /> },
  { w: 'w-[36px]', on: true, caret: true, icon: <g><path d="M3 15L13 4" stroke="#666" strokeWidth="1.2" /><path d="M3 15h13" stroke="#666" strokeWidth="2.500" /></g> },
  { w: 'w-[35px]', caret: true, icon: <g><path d="M3 3v6M0.500 6h5" stroke="#333" strokeWidth="1.2" /><rect x="6" y="10" width="10" height="5" fill="#555" /></g> },
  { w: 'w-[25px]', icon: <g><rect x="6" y="1" width="9" height="15" rx="1" stroke="#333" strokeWidth="1.2" fill="#888" /><path d="M4 17h9" stroke="#333" strokeWidth="1.500" /></g> },
  { w: 'w-[25px]', icon: <g><path d="M4 17v-8c0-4 4-6 9-7" stroke="#666" strokeWidth="1.2" /><path d="M10 9l5 4-5 3z" fill="#555" /></g> },
];
const statusGaps = ['ml-[452px]', 'ml-[5px]', 'ml-[6px]', 'ml-[6px]', 'ml-[4px]', 'ml-[3px]', 'ml-[3px]'];

function StatusBar() {
  return (
    <div className="h-[31px] bg-[#fbfbfb] flex items-center relative text-[12px] text-[#333] shrink-0">
      <div className="absolute left-[2px] top-[7px]">层高：6.32</div>
      <div className="absolute left-[92px] top-[7px]">标高：0~6.32</div>
      <div className="absolute left-[231px] top-[7px]">选中图元：1(1)</div>
      <div className="absolute left-[342px] top-[7px]">隐藏图元：0</div>
      {statusBtns.map((b, i) => (
        <div key={i} className={`${statusGaps[i]} ${b.w} h-[25px] rounded-[3px] border flex items-center justify-center gap-[1px] ${b.on ? 'bg-[#dbe9f9] border-[#4a90e2]' : 'bg-white border-[#bbb]'}`}>
          <Svg w={19} h={18}>{b.icon}</Svg>
          {b.caret && <Caret color="#444" />}
        </div>
      ))}
      <Svg w={16} h={16} className="ml-[15px]"><path d="M2 14L14 2M9 2h5v5M2 9v5h5" stroke="#333" strokeWidth="1.200" /></Svg>
      <span className="ml-[3px] whitespace-nowrap">按鼠标左键指定第一个角点，或拾取构件图元</span>
      <div className="ml-auto flex items-center pr-[11px]">
        <div className="w-[14px] h-[14px] rounded-full bg-[#f7912b] text-white text-[11px] leading-[14px] text-center font-bold">!</div>
        <span className="ml-[6px]">合法性检查存在问题，请点击查看</span>
        <div className="ml-[14px] w-[14px] h-[14px] rounded-full bg-[#6fbe0a] flex items-center justify-center">
          <Svg w={10} h={8}><path d="M1 4l3 3 5-6" stroke="#fff" strokeWidth="1.500" /></Svg>
        </div>
        <span className="ml-[6px]">实时计算已完成</span>
      </div>
    </div>
  );
}

function TaskButton({ children, active }) {
  return (
    <div className={`w-[58px] h-[38px] mr-[4px] rounded-[3px] border border-[#12507f] shadow-[inset_0_0_0_1px_rgba(255,255,255,0.35)] flex items-center justify-center ${active ? 'bg-[#8ec6e8]' : 'bg-[#5ba4d0]'}`}>
      {children}
    </div>
  );
}

function Taskbar() {
  const trayIcons = [
    <g key="k"><rect x="1" y="6" width="15" height="9" rx="1" fill="#d5d5d5" stroke="#777" /><path d="M3 9h11M3 12h11" stroke="#888" strokeDasharray="1 1" /></g>,
    <g key="h"><circle cx="8" cy="9" r="7" fill="#1c2fa0" stroke="#999" /><text x="8" y="13" fontSize="11" fontWeight="bold" fill="#fff" textAnchor="middle">?</text></g>,
    <g key="w"><path d="M3 7h5v5M6 7V4h5v3h-3" stroke="#fff" strokeWidth="1" /><path d="M4 14h6l-3 2z" fill="#fff" /></g>,
    <g key="e"><circle cx="8" cy="9" r="7" fill="#7dc52a" /><text x="8" y="14" fontSize="14" fontWeight="bold" fill="#fff" textAnchor="middle">e</text></g>,
    <g key="u"><rect x="4" y="1" width="6" height="14" rx="1" fill="#777" /><circle cx="12" cy="13" r="4.500" fill="#1e9a38" /><path d="M10 13l1.500 1.500 2.500-3" stroke="#fff" /></g>,
    <g key="s"><path d="M1 7h3l5-4v12l-5-4H1z" fill="#e06a30" stroke="#a33" strokeWidth="0.500" /><path d="M11 5c2 2 2 6 0 8" stroke="#666" /></g>,
    <g key="p"><circle cx="8" cy="9" r="7.500" fill="#e8d820" /><path d="M8 5v8M4 9h8" stroke="#1a7a1a" strokeWidth="2" /></g>,
    <g key="c"><rect x="1" y="1" width="15" height="15" rx="2" fill="#f7a51c" /><path d="M4 11c0-3 3-3 4-4s3 0 3 2M6 12c2 0 4-2 7-2" stroke="#fff" strokeWidth="1.400" /></g>,
    <g key="b"><rect x="1" y="1" width="15" height="15" fill="#fff" /><path d="M4 9l5-5 4 4" stroke="#1a6fd0" strokeWidth="2" /><rect x="4" y="10" width="9" height="4" fill="#f07a20" /></g>,
    <g key="g"><path d="M13 3a7 7 0 1 0 2 7H9" stroke="#2a9af0" strokeWidth="2.500" /></g>,
    <g key="n"><path d="M1 14h2v2H1zM5 11h2v5H5zM9 8h2v8H9zM13 4h2v12h-2z" fill="#fff" /></g>,
    <g key="v"><path d="M2 7h3l4-4v12l-4-4H2z" fill="#eee" /><path d="M11 6c1.500 2 1.500 4 0 6M13 4c2.500 3 2.500 7 0 10" stroke="#eee" /></g>,
  ];
  return (
    <div className="h-[40px] flex items-center border-t-2 border-[#0f3f66] text-white shrink-0 bg-[linear-gradient(90deg,#1c5f94_0%,#2b78ae_3%,#5aa5d5_18%,#66aedb_40%,#5aa0d2_58%,#2f73b3_72%,#1c508f_85%,#1a4a84_100%)]">
      <div className="w-[40px] h-[36px] ml-[6px] rounded-full border border-[#8fb4cc] bg-[radial-gradient(circle_at_50%_35%,#7fb8dc,#1d5f8f_70%)] flex items-center justify-center">
        <Svg w={18} h={16}>
          <path d="M1 2l7-1v6H1z" fill="#e8482e" />
          <path d="M9.500 1L17 0v7H9.500z" fill="#7cbb2b" />
          <path d="M1 8h7v6l-7-1z" fill="#2e8fe6" />
          <path d="M9.500 8H17v7l-7.500-1z" fill="#f6c21c" />
        </Svg>
      </div>
      <div className="ml-[10px] w-[20px] grid grid-cols-3 gap-[2px] justify-items-center">
        {Array.from({ length: 18 }).map((_, i) => (
          <div key={i} className="w-[2px] h-[2px] bg-[#123a5c]" />
        ))}
      </div>
      <TaskButton>
        <Svg w={28} h={34}><path d="M24 6c-4-5-15-6-19 3-4 10 4 21 12 21 6 0 8-6 6-11l-9 1 3 4" stroke="#1c8cf0" strokeWidth="5" /></Svg>
      </TaskButton>
      <TaskButton active>
        <div className="w-[32px] h-[34px] rounded-[5px] bg-[#2a7cf0] flex items-center justify-center">
          <Svg w={18} h={22}><path d="M2 7l14-6v6l-5 1.500V20l-4-1V10L2 11z" fill="#fff" /></Svg>
        </div>
      </TaskButton>
      <TaskButton>
        <div className="w-[32px] h-[34px] rounded-[5px] bg-[#f7a51c] flex items-center justify-center">
          <Svg w={22} h={20}><path d="M4 13c-3-4 2-9 6-6l3 4c3 3 7-1 5-4M8 17l8-9M5 16c3 2 6 1 8-2" stroke="#fff" strokeWidth="2.200" /></Svg>
        </div>
      </TaskButton>
      <TaskButton>
        <div className="w-[30px] h-[32px] rounded-full bg-white flex items-center justify-center text-[32px] leading-[30px] font-bold text-[#6fc020]">e</div>
      </TaskButton>
      <div className="ml-auto flex items-center">
        <div className="w-[14px] grid grid-cols-4 gap-[1px] mr-[11px]">
          {Array.from({ length: 32 }).map((_, i) => (
            <div key={i} className="w-[2px] h-[2px] bg-[#0d2f52]" />
          ))}
        </div>
        <div className="flex gap-[7px]">
          {trayIcons.map((icon, i) => (
            <Svg key={i} w={17} h={18}>{icon}</Svg>
          ))}
        </div>
        <div className="w-[98px] pl-[6px] text-center text-[14px] leading-[18px]">
          <div>15:31</div>
          <div>2024/7/27</div>
        </div>
        <div className="w-[16px] h-[16px] ml-[4px] bg-white flex items-center justify-center">
          <Svg w={6} h={8}><path d="M0 0l6 4-6 4z" fill="#111" /></Svg>
        </div>
        <div className="w-[14px] h-[36px] ml-[12px] border border-[#6f9cc4] rounded-[1px] bg-[#2c5f96]" />
      </div>
    </div>
  );
}

export default function App() {
  return (
    <div className="w-[1920px] h-[1080px] overflow-hidden bg-[#f0f0f0] flex flex-col font-['Roboto','Noto_Sans_CJK_SC',sans-serif] text-[#333]">
      <div className="h-[27px] bg-white flex items-center shrink-0 relative">
        <QuickBar />
        <div className="ml-[123px] text-[13px] text-[#333] whitespace-nowrap">广联达BIM土建计量平台 GTJ2025 - [C:\Users\Administrator\Desktop\图形文件\焦炉工程-2024-04-06-08-42-43.GTJ]</div>
        <div className="ml-auto flex items-center gap-[22px] pr-[14px]">
          <div className="w-[6px] h-[2px] bg-[#555]" />
          <Svg w={12} h={12}><path d="M1 4h7v7H1zM4 4V1h7v7H8" stroke="#555" strokeWidth="1" /></Svg>
          <Close />
        </div>
      </div>
      <MenuBar />
      <div className="h-[101px] bg-white flex items-start pt-[3px] shrink-0 border-b border-[#dcdcdc]">
        <SelectGroup />
        {ribbonGroups.map((g) => (
          <RibbonGroup key={g.label} group={g} />
        ))}
      </div>
      <SelectorBar />
      <div className="flex-1 min-h-0 flex gap-[4px]">
        <NavPanel />
        <div className="w-[327px] shrink-0 flex flex-col">
          <MemberPanel />
          <PropPanel />
        </div>
        <Viewport />
        <DisplayPanel />
      </div>
      <StatusBar />
      <Taskbar />
    </div>
  );
}
